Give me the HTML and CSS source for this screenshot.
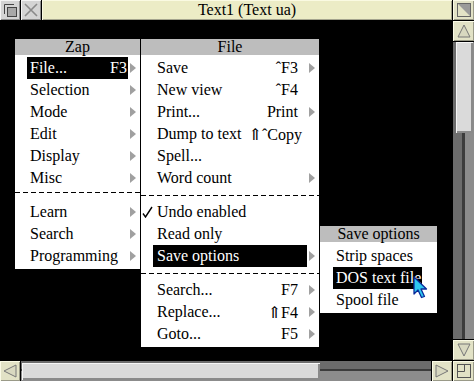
FILE: index.html
```html
<!DOCTYPE html>
<html lang="en">
  <head>
    <meta charset="UTF-8" />
    <title>Text1 (Text ua)</title>
    <link rel="stylesheet" href="styles.css">
  </head>
  <body>
    <div class="window">
      <div class="titlebar">
        <span class="tool">
          <svg width="20" height="20" viewBox="0 0 20 20"><path d="M4.5 14V4.5H14" fill="none" stroke="#444"/><rect x="7.5" y="7.5" width="9" height="9" fill="#a8a8a8" stroke="#444"/></svg>
        </span>
        <span class="tool">
          <svg width="20" height="20" viewBox="0 0 20 20"><path d="M4 4L16 16M16 4L4 16" stroke="#8a8a8a" stroke-width="1.6"/></svg>
        </span>
        <div class="title">Text1 (Text ua)</div>
        <span class="tool tool-cream tool-wide">
          <svg width="20" height="20" viewBox="0 0 20 20"><rect x="3.5" y="3.5" width="13" height="13" fill="none" stroke="#666"/><path d="M4 4H16V16Z" fill="#9a9a9a"/></svg>
        </span>
      </div>

      <div class="work">
        <div class="pane"></div>
        <div class="vscroll">
          <span class="tool tool-cream tool-wide">
            <svg width="20" height="20" viewBox="0 0 20 20"><path d="M10 4L16 16H4Z" fill="#d8d8c0" stroke="#777"/></svg>
          </span>
          <div class="well well-v"><div class="thumb thumb-v"></div></div>
          <span class="tool tool-cream tool-wide">
            <svg width="20" height="20" viewBox="0 0 20 20"><path d="M4 4H16L10 16Z" fill="#d8d8c0" stroke="#777"/></svg>
          </span>
        </div>
      </div>

      <div class="hscroll">
        <span class="tool tool-cream">
          <svg width="20" height="20" viewBox="0 0 20 20"><path d="M4 10L16 4V16Z" fill="#d8d8c0" stroke="#777"/></svg>
        </span>
        <div class="well well-h"><div class="thumb thumb-h"></div></div>
        <span class="tool tool-cream">
          <svg width="20" height="20" viewBox="0 0 20 20"><path d="M4 4L16 10L4 16Z" fill="#d8d8c0" stroke="#777"/></svg>
        </span>
        <span class="tool tool-cream tool-wide">
          <svg width="20" height="20" viewBox="0 0 20 20"><rect x="3.5" y="3.5" width="13" height="13" fill="none" stroke="#555"/><path d="M3.5 10.5H10.5V3.5" fill="none" stroke="#555"/></svg>
        </span>
      </div>
    </div>

    <!-- Zap main menu -->
    <div class="menu menu-zap">
      <div class="menu-title">Zap</div>
      <ul class="menu-body">
        <li class="item"><div class="item-main is-selected"><span class="label">File...</span><span class="keys">F3</span></div><span class="arrow-cell"><svg width="6" height="10"><path d="M0 0L6 5L0 10Z"/></svg></span></li>
        <li class="item"><div class="item-main"><span class="label">Selection</span></div><span class="arrow-cell"><svg width="6" height="10"><path d="M0 0L6 5L0 10Z"/></svg></span></li>
        <li class="item"><div class="item-main"><span class="label">Mode</span></div><span class="arrow-cell"><svg width="6" height="10"><path d="M0 0L6 5L0 10Z"/></svg></span></li>
        <li class="item"><div class="item-main"><span class="label">Edit</span></div><span class="arrow-cell"><svg width="6" height="10"><path d="M0 0L6 5L0 10Z"/></svg></span></li>
        <li class="item"><div class="item-main"><span class="label">Display</span></div><span class="arrow-cell"><svg width="6" height="10"><path d="M0 0L6 5L0 10Z"/></svg></span></li>
        <li class="item"><div class="item-main"><span class="label">Misc</span></div><span class="arrow-cell"><svg width="6" height="10"><path d="M0 0L6 5L0 10Z"/></svg></span></li>
        <li class="sep sep-zap"></li>
        <li class="item"><div class="item-main"><span class="label">Learn</span></div><span class="arrow-cell"><svg width="6" height="10"><path d="M0 0L6 5L0 10Z"/></svg></span></li>
        <li class="item"><div class="item-main"><span class="label">Search</span></div><span class="arrow-cell"><svg width="6" height="10"><path d="M0 0L6 5L0 10Z"/></svg></span></li>
        <li class="item"><div class="item-main"><span class="label">Programming</span></div><span class="arrow-cell"><svg width="6" height="10"><path d="M0 0L6 5L0 10Z"/></svg></span></li>
      </ul>
    </div>

    <!-- File submenu -->
    <div class="menu menu-file">
      <div class="menu-title">File</div>
      <ul class="menu-body">
        <li class="item"><span class="tick"></span><div class="item-main"><span class="label">Save</span><span class="keys">ˆF3</span></div><span class="arrow-cell"><svg width="6" height="10"><path d="M0 0L6 5L0 10Z"/></svg></span></li>
        <li class="item"><span class="tick"></span><div class="item-main"><span class="label">New view</span><span class="keys">ˆF4</span></div><span class="arrow-cell"></span></li>
        <li class="item"><span class="tick"></span><div class="item-main"><span class="label">Print...</span><span class="keys">Print</span></div><span class="arrow-cell"><svg width="6" height="10"><path d="M0 0L6 5L0 10Z"/></svg></span></li>
        <li class="item"><span class="tick"></span><div class="item-main"><span class="label">Dump to text</span><span class="keys keys-wide">⇑ˆCopy</span></div><span class="arrow-cell"></span></li>
        <li class="item"><span class="tick"></span><div class="item-main"><span class="label">Spell...</span></div><span class="arrow-cell"></span></li>
        <li class="item"><span class="tick"></span><div class="item-main"><span class="label">Word count</span></div><span class="arrow-cell"><svg width="6" height="10"><path d="M0 0L6 5L0 10Z"/></svg></span></li>
        <li class="sep"></li>
        <li class="item"><span class="tick"><svg width="11" height="12" viewBox="0 0 11 12"><path d="M1 7.5L3.5 11L10 1" fill="none" stroke="#000" stroke-width="1.4"/></svg></span><div class="item-main"><span class="label">Undo enabled</span></div><span class="arrow-cell"></span></li>
        <li class="item"><span class="tick"></span><div class="item-main"><span class="label">Read only</span></div><span class="arrow-cell"></span></li>
        <li class="item"><span class="tick"></span><div class="item-main is-selected"><span class="label">Save options</span></div><span class="arrow-cell"><svg width="6" height="10"><path d="M0 0L6 5L0 10Z"/></svg></span></li>
        <li class="sep"></li>
        <li class="item"><span class="tick"></span><div class="item-main"><span class="label">Search...</span><span class="keys">F7</span></div><span class="arrow-cell"><svg width="6" height="10"><path d="M0 0L6 5L0 10Z"/></svg></span></li>
        <li class="item"><span class="tick"></span><div class="item-main"><span class="label">Replace...</span><span class="keys">⇑F4</span></div><span class="arrow-cell"><svg width="6" height="10"><path d="M0 0L6 5L0 10Z"/></svg></span></li>
        <li class="item"><span class="tick"></span><div class="item-main"><span class="label">Goto...</span><span class="keys">F5</span></div><span class="arrow-cell"><svg width="6" height="10"><path d="M0 0L6 5L0 10Z"/></svg></span></li>
      </ul>
    </div>

    <!-- Save options submenu -->
    <div class="menu menu-save">
      <div class="menu-title">Save options</div>
      <ul class="menu-body">
        <li class="item"><span class="tick"></span><div class="item-main"><span class="label">Strip spaces</span></div><span class="arrow-cell"></span></li>
        <li class="item"><span class="tick"></span><div class="item-main is-selected"><span class="label">DOS text file</span></div><span class="arrow-cell"></span></li>
        <li class="item"><span class="tick"></span><div class="item-main"><span class="label">Spool file</span></div><span class="arrow-cell"></span></li>
      </ul>
    </div>

    <svg class="pointer" width="15" height="23" viewBox="0 0 15 23"><path d="M1 1V18L5 14L8.5 21.5L11.5 20.5L8 13H13.5Z" fill="#2ec8f0" stroke="#0a2a9a" stroke-width="1.3" stroke-linejoin="round"/></svg>
  </body>
</html>
```

FILE: styles.css
```css
* {
  padding: 0;
  margin: 0;
  box-sizing: border-box;
}

body {
  position: relative;
  width: 474px;
  height: 381px;
  overflow: hidden;
  font-family: "Liberation Serif", "DejaVu Serif", serif;
  font-size: 16px;
  color: #000;
  background-color: #000;
}

ul {
  list-style: none;
}

/* window frame */

.window {
  display: flex;
  flex-direction: column;
  gap: 1px;
  width: 474px;
  height: 381px;
}

.titlebar {
  display: flex;
  gap: 1px;
  height: 20px;
}

.work {
  display: flex;
  flex: 1;
  gap: 1px;
}

.pane {
  flex: 1;
  background: #000;
}

.vscroll {
  display: flex;
  flex-direction: column;
  gap: 1px;
  width: 21px;
}

.hscroll {
  display: flex;
  gap: 1px;
  height: 20px;
}

.tool {
  display: flex;
  flex: none;
  align-items: center;
  justify-content: center;
  width: 20px;
  height: 20px;
  background: #d4d4d4;
  box-shadow: inset 1px 1px #f4f4f4, inset -1px -1px #8c8c8c;
}

.tool-cream {
  background: #e2e2c6;
  box-shadow: inset 1px 1px #fafae6, inset -1px -1px #9a9a88;
}

.tool-wide {
  width: 21px;
}

.title {
  flex: 1;
  font-size: 16px;
  line-height: 20px;
  text-align: center;
  background: #ececc6;
  box-shadow: inset 1px 1px #fafae2, inset -1px -1px #a4a48e;
}

/* scroll bars */

.well {
  display: flex;
  flex: 1;
}

.well-v {
  flex-direction: column;
  padding: 0 1px 0 3px;
  background: linear-gradient(to right, #6c6c6c 0 9px, #3c3c3c 9px 12px, #8c8c8c 12px);
}

.well-h {
  padding: 2px 0 1px 1px;
  background: linear-gradient(to bottom, #6c6c6c 0 8px, #3c3c3c 8px 10px, #8c8c8c 10px);
}

.thumb {
  background: #dadada;
  box-shadow: inset 1px 1px #f6f6f6, inset -2px -2px #8a8a8a;
}

.thumb-v {
  height: 91px;
}

.thumb-h {
  width: 298px;
}

/* menus */

.menu {
  position: absolute;
  background: #fff;
}

.menu-title {
  height: 16px;
  line-height: 16px;
  text-align: center;
  background: #bdbdbd;
}

.menu-body {
  padding: 2px 0;
}

.item {
  display: flex;
  align-items: center;
  height: 22px;
}

.tick {
  display: flex;
  flex: none;
  align-items: center;
  width: var(--gutter-left);
  height: 100%;
  padding-left: 1px;
}

.item-main {
  display: flex;
  flex: 1;
  align-items: center;
  height: 100%;
  padding: 0 var(--pad-right) 0 var(--pad-left);
  white-space: nowrap;
}

.item-main.is-selected {
  color: #fff;
  background: #000;
}

.label {
  flex: 1;
}

.arrow-cell {
  display: flex;
  flex: none;
  align-items: center;
  width: var(--gutter-right);
  height: 100%;
  padding-left: 2px;
}

.arrow-cell path {
  fill: #a0a0a0;
}

.sep {
  height: 12px;
  background: repeating-linear-gradient(to right, #000 0 5px, transparent 5px 8px) 0 6px / 100% 1px no-repeat;
}

.sep-zap {
  background-position: 0 3px;
}

.menu-zap {
  top: 39px;
  left: 15px;
  width: 125px;
  --gutter-left: 12px;
  --gutter-right: 12px;
  --pad-left: 3px;
  --pad-right: 1px;
}

.menu-zap .tick {
  display: none;
}

.menu-zap .item::before {
  width: 12px;
  content: "";
}

.menu-file {
  top: 39px;
  left: 141px;
  width: 178px;
  --gutter-left: 12px;
  --gutter-right: 12px;
  --pad-left: 4px;
  --pad-right: 9px;
}

.keys-wide {
  margin-right: -4px;
}

.menu-save {
  top: 226px;
  left: 320px;
  width: 117px;
  --gutter-left: 13px;
  --gutter-right: 15px;
  --pad-left: 3px;
  --pad-right: 0px;
}

.menu-save .menu-body {
  padding-top: 3px;
}

.pointer {
  position: absolute;
  top: 276px;
  left: 413px;
}
```
